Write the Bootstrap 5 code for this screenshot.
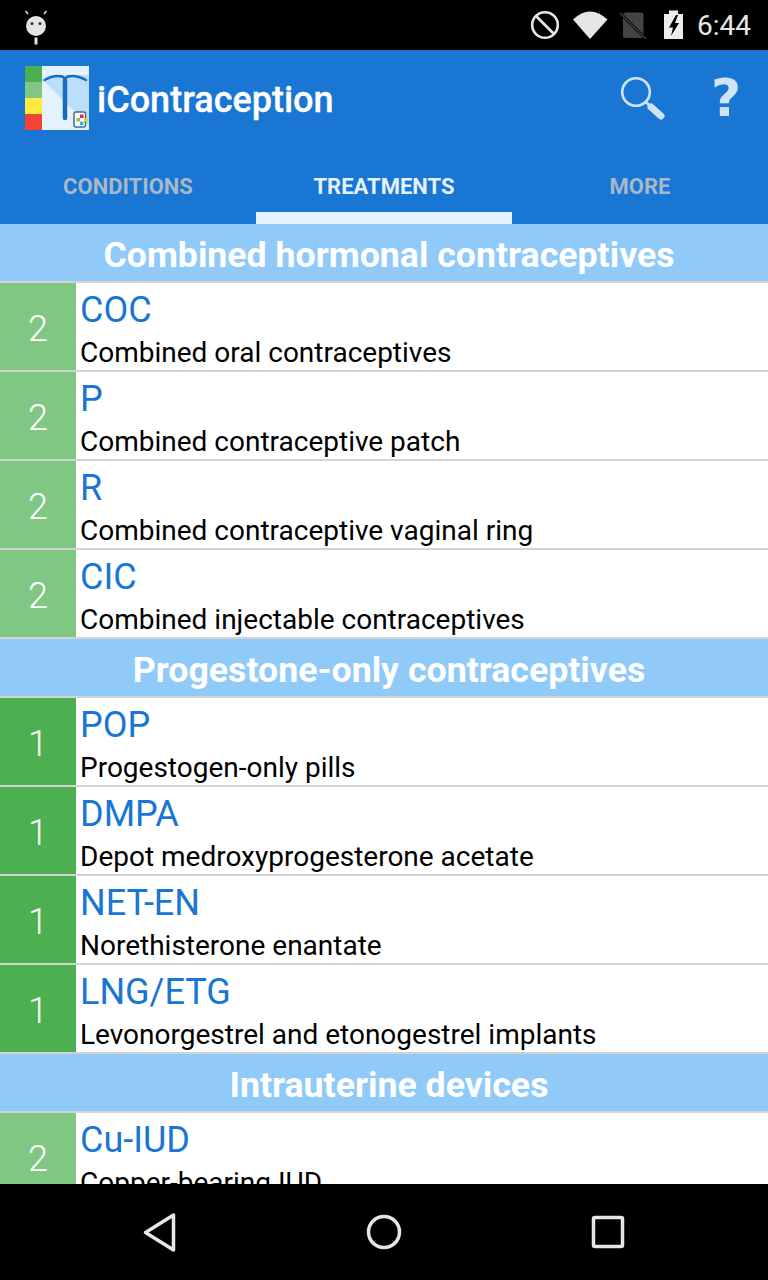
<!DOCTYPE html>
<html lang="en">
<head>
<meta charset="utf-8">
<title>iContraception</title>
<link href="https://cdn.jsdelivr.net/npm/bootstrap@5.3.0/dist/css/bootstrap.min.css" rel="stylesheet">
<style>
html,body{height:100%;margin:0}
body{font-family:Roboto,"Liberation Sans",sans-serif;background:#000;width:768px;height:1280px;overflow:hidden}
.screen{width:768px;height:1280px}
.status-top{height:50px;background:#000;padding-left:24px;padding-right:17px}
.clock{font-size:28px;color:#e6e6e6;line-height:50px;margin-left:13px;padding-top:2px}
.appbar{background:#1976d2;height:174px}
.appbar-head{height:96px;padding-left:25px}
.app-name{font-size:36px;font-weight:500;color:#fff;margin-left:8px;line-height:1;margin-top:4px;-webkit-text-stroke:.3px #fff}
.act-search{margin-left:auto;margin-right:38px;display:block;margin-top:1px;transform:translateX(-1px)}
.act-help{font-family:"DejaVu Sans",sans-serif;font-weight:700;font-size:52px;line-height:1;color:#cfe3f7;width:42px;text-align:center;margin-right:21px;margin-top:0}
.tab-strip{height:78px}
.tab-item{width:256px;height:78px;font-size:22px;font-weight:700;text-align:center;padding-top:27px;line-height:28px;color:#a7b8cb;border-bottom:12px solid transparent}
.tab-item.on{color:#e3f2fd;border-bottom-color:#e3f2fd}
.scroller{height:960px;background:#fff;overflow:hidden}
.sect{height:59px;background:#90caf9;border-bottom:2px solid #d3d3d3;color:#fff;font-size:35.7px;font-weight:700;line-height:62px;text-align:center;padding-left:10px}
.item{height:89px;border-bottom:2px solid #d3d3d3;background:#fff}
.level{width:76px;flex:none;color:#fff;font-size:36px;font-weight:300;text-align:center;line-height:92px}
.lv1{background:#4caf50}
.lv2{background:#81c784}
.item-body{padding-left:5px;min-width:0}
.item-code{color:#1976d2;font-size:36px;line-height:40px;padding-top:7px;margin-left:-1px}
.item-desc{color:#000;font-size:28px;line-height:32px;padding-top:7px;margin-left:-1px}
.softkeys{height:96px;background:#000;padding:0 48px}
.softkey{width:224px}
</style>
</head>
<body>
<div class="screen d-flex flex-column">
  <div class="status-top d-flex align-items-center">
    <svg width="24" height="42" viewBox="0 0 24 42" class="me-auto" aria-hidden="true">
      <line x1="4" y1="10" x2="1.500" y2="7" stroke="#ddd" stroke-width="1.600"/><line x1="20" y1="10" x2="22.500" y2="7" stroke="#ddd" stroke-width="1.600"/>
      <circle cx="12" cy="22" r="10" fill="#e4e4e4"/><circle cx="8" cy="19.500" r="1.500" fill="#333"/><circle cx="16" cy="19.500" r="1.500" fill="#333"/>
      <rect x="10.500" y="33.500" width="3" height="7" fill="#e4e4e4"/>
    </svg>
    <svg width="163" height="42" viewBox="521 4 163 42" aria-hidden="true">
      <circle cx="545" cy="25" r="12.800" fill="none" stroke="#e6e6e6" stroke-width="2.600"/><line x1="536" y1="16" x2="554" y2="34" stroke="#e6e6e6" stroke-width="2.600"/>
      <path d="M573 19.500Q590 3.500 607.500 19.500L590 39Z" fill="#e6e6e6"/>
      <path d="M623 15a2.500 2.500 0 0 1 2.500-2.500H641a2.500 2.500 0 0 1 2.500 2.500V36a2 2 0 0 1-2 2H625a2 2 0 0 1-2-2Z" fill="#444"/>
      <line x1="621" y1="14" x2="646" y2="39" stroke="#000" stroke-width="3"/><line x1="620" y1="13" x2="646" y2="39" stroke="#444" stroke-width="1.200"/>
      <path d="M669 14V10.500H678V14H683V39H664V14Z" fill="#ececec"/>
      <path d="M676 15L669 27.500H673L671 36L679 23H675L678 15Z" fill="#000"/>
    </svg>
    <span class="clock">6:44</span>
  </div>
  <div class="appbar">
    <div class="appbar-head d-flex align-items-center">
      <svg width="64" height="64" viewBox="0 0 64 64" aria-hidden="true">
        <rect width="64" height="64" fill="#e3f2fd"/>
        <path d="M18 14L64 60V9H30Z" fill="#bbdefb"/>
        <rect width="17" height="16" fill="#4caf50"/><rect y="16" width="17" height="16" fill="#81c784"/><rect y="32" width="17" height="16" fill="#ffeb3b"/><rect y="48" width="17" height="16" fill="#f44336"/>
        <path d="M19.500 14Q29 8.500 37 10.500Q39.500 11.500 40 13Q40.500 11.500 43 10.500Q51 8.500 61 14" fill="none" stroke="#1a6bbd" stroke-width="2.500" stroke-linecap="round"/>
        <path d="M40 14V52" stroke="#1a6bbd" stroke-width="4.500" stroke-linecap="round"/>
        <rect x="49" y="46" width="11.500" height="15" rx="2" fill="#fff" stroke="#3d6f9e" stroke-width="1.500"/>
        <rect x="55" y="48.500" width="3.500" height="3.500" fill="#e91e63"/><rect x="51.500" y="52" width="3.500" height="3.500" fill="#8bc34a"/><rect x="59" y="52" width="3.500" height="3.500" fill="#ffc107"/><rect x="55" y="55.500" width="3.500" height="3.500" fill="#29b6f6"/>
      </svg>
      <span class="app-name">iContraception</span>
      <svg class="act-search" width="46" height="46" viewBox="0 0 46 46" aria-hidden="true">
        <circle cx="16" cy="16" r="13.800" fill="none" stroke="#cfe3f7" stroke-width="2.600"/>
        <line x1="26" y1="26" x2="30" y2="30" stroke="#cfe3f7" stroke-width="2.600"/>
        <line x1="31" y1="31" x2="41" y2="40" stroke="#cfe3f7" stroke-width="7" stroke-linecap="round"/>
      </svg>
      <span class="act-help">?</span>
    </div>
    <div class="tab-strip d-flex">
      <div class="tab-item">CONDITIONS</div>
      <div class="tab-item on">TREATMENTS</div>
      <div class="tab-item">MORE</div>
    </div>
  </div>
  <div class="scroller">
    <div class="sect">Combined hormonal contraceptives</div>
    <div class="item d-flex"><div class="level lv2">2</div><div class="item-body"><div class="item-code">COC</div><div class="item-desc">Combined oral contraceptives</div></div></div>
    <div class="item d-flex"><div class="level lv2">2</div><div class="item-body"><div class="item-code">P</div><div class="item-desc">Combined contraceptive patch</div></div></div>
    <div class="item d-flex"><div class="level lv2">2</div><div class="item-body"><div class="item-code">R</div><div class="item-desc">Combined contraceptive vaginal ring</div></div></div>
    <div class="item d-flex"><div class="level lv2">2</div><div class="item-body"><div class="item-code">CIC</div><div class="item-desc">Combined injectable contraceptives</div></div></div>
    <div class="sect">Progestone-only contraceptives</div>
    <div class="item d-flex"><div class="level lv1">1</div><div class="item-body"><div class="item-code">POP</div><div class="item-desc">Progestogen-only pills</div></div></div>
    <div class="item d-flex"><div class="level lv1">1</div><div class="item-body"><div class="item-code">DMPA</div><div class="item-desc">Depot medroxyprogesterone acetate</div></div></div>
    <div class="item d-flex"><div class="level lv1">1</div><div class="item-body"><div class="item-code">NET-EN</div><div class="item-desc">Norethisterone enantate</div></div></div>
    <div class="item d-flex"><div class="level lv1">1</div><div class="item-body"><div class="item-code">LNG/ETG</div><div class="item-desc">Levonorgestrel and etonogestrel implants</div></div></div>
    <div class="sect">Intrauterine devices</div>
    <div class="item d-flex"><div class="level lv2">2</div><div class="item-body"><div class="item-code">Cu-IUD</div><div class="item-desc">Copper-bearing IUD</div></div></div>
  </div>
  <div class="softkeys d-flex align-items-center">
    <div class="softkey d-flex justify-content-center"><svg width="40" height="44" viewBox="0 0 40 44" aria-hidden="true"><path d="M33.500 5V40L5.500 22.500Z" fill="none" stroke="#e6e6e6" stroke-width="3.500" stroke-linejoin="round"/></svg></div>
    <div class="softkey d-flex justify-content-center"><svg width="40" height="40" viewBox="0 0 40 40" aria-hidden="true"><circle cx="20" cy="20" r="15.500" fill="none" stroke="#e6e6e6" stroke-width="3.500"/></svg></div>
    <div class="softkey d-flex justify-content-center"><svg width="40" height="40" viewBox="0 0 40 40" aria-hidden="true"><rect x="5.500" y="5.500" width="29" height="29" rx="1.500" fill="none" stroke="#e6e6e6" stroke-width="3.500"/></svg></div>
  </div>
</div>
<script src="https://cdn.jsdelivr.net/npm/bootstrap@5.3.0/dist/js/bootstrap.bundle.min.js"></script>
</body>
</html>
